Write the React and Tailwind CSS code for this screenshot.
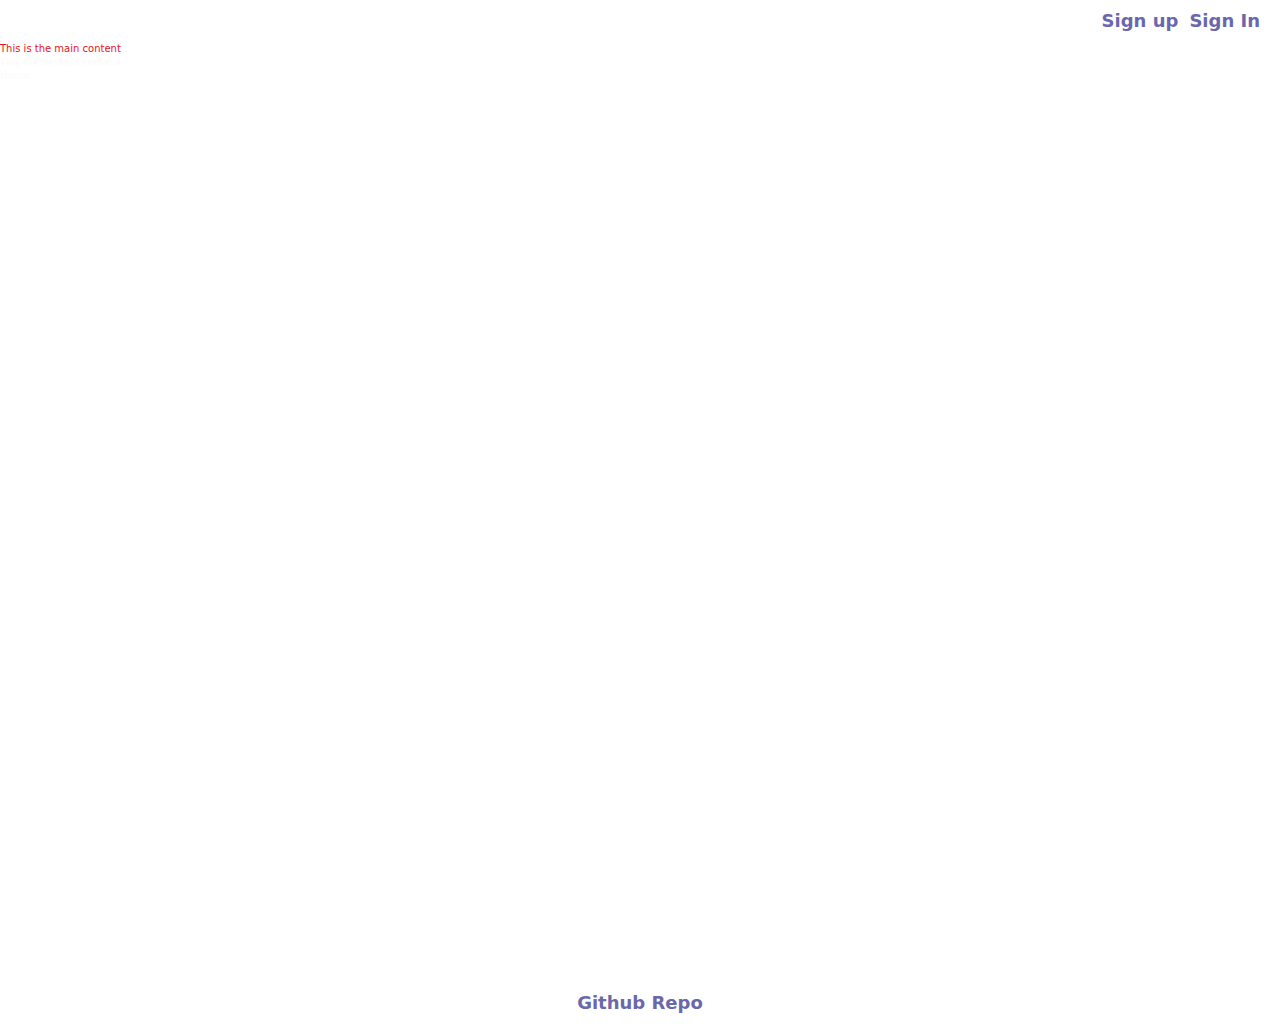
export default function App() {
  return (
    <div className="min-h-screen flex flex-col bg-white" style={{ fontFamily: '"DejaVu Sans", sans-serif' }}>
      <header className="flex justify-end gap-[11px] pr-5 pt-[9px] h-[42px]">
        <a href="#" className="text-[18px] leading-[24px] font-bold text-[#6b67ad]">Sign up</a>
        <a href="#" className="text-[18px] leading-[24px] font-bold text-[#6b67ad]">Sign In</a>
      </header>
      <main className="flex-1">
        <p className="text-[10px] leading-[14px] text-[#e8131b]">This is the main content</p>
        <p className="text-[10px] leading-[14px] text-[#fcfbfb]">This is the main content</p>
        <p className="text-[10px] leading-[12px] text-[#fcfbfb]">Home</p>
      </main>
      <footer className="flex justify-center pb-[9px]">
        <a href="#" className="text-[18px] leading-[24px] font-bold text-[#6b67ad]">Github Repo</a>
      </footer>
    </div>
  )
}
